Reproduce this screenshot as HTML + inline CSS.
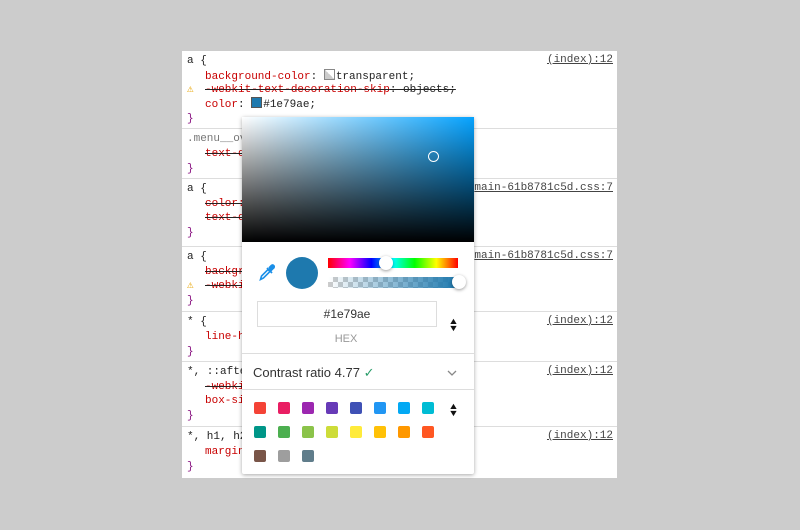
<!DOCTYPE html><html><head><style>
body{margin:0;background:#cccccc;width:800px;height:530px;position:relative;overflow:hidden;font-family:"Liberation Mono",monospace}
#p{position:absolute;left:182px;top:51px;width:435px;height:427px;background:#fff;font-size:11px}
.r{position:absolute;left:0;width:435px;border-bottom:1px solid #ddd}
.l{position:absolute;left:5px;height:14px;line-height:14px;white-space:pre;color:#222}
.k{color:#c80000}.s{text-decoration:line-through;text-decoration-color:#222}
.src{position:absolute;right:4px;color:#444;text-decoration:underline}
.g{color:#777}.b{color:#881280}
.cs{display:inline-block;width:9px;height:9px;vertical-align:-1px;margin-right:1px}
#pop{position:absolute;left:242px;top:117px;width:232px;height:357px;background:#fff;box-shadow:0 1px 4px rgba(0,0,0,.35);border-radius:2px;font-family:"Liberation Sans",sans-serif}
.sw{position:absolute;width:12px;height:12px;border-radius:2px}
.ar{position:absolute;font-size:9px;line-height:7px;color:#111;transform:scaleX(1.2)}
</style></head><body>
<div id="p">
<div class="r" style="top:0;height:77px">
<div class="l" style="top:3px">a {</div><div class="src" style="top:3px">(index):12</div>
<div class="l" style="top:18px;left:23px"><span class="k">background-color</span>: <span class="cs" style="border:1px solid #888;background:linear-gradient(45deg,#ccc 50%,#fff 50%)"></span>transparent;</div>
<div class="l" style="top:32px;left:5px"><span style="color:#e8a400">⚠</span></div>
<div class="l s" style="top:32px;left:23px"><span class="k">-webkit-text-decoration-skip</span>: objects;</div>
<div class="l" style="top:46px;left:23px"><span class="k">color</span>: <span class="cs" style="border:1px solid #555;background:#1e79ae"></span>#1e79ae;</div>
<div class="l b" style="top:61px">}</div></div>
<div class="r" style="top:78px;height:49px">
<div class="l g" style="top:3px">.menu__ov</div><div class="l k s" style="top:18px;left:23px">text-d</div><div class="l b" style="top:33px">}</div></div>
<div class="r" style="top:128px;height:67px">
<div class="l" style="top:3px">a {</div><div class="src" style="top:3px">main-61b8781c5d.css:7</div><div class="l k s" style="top:18px;left:23px">color:</div><div class="l k s" style="top:32px;left:23px">text-d</div><div class="l b" style="top:47px">}</div></div>
<div class="r" style="top:196px;height:64px">
<div class="l" style="top:3px">a {</div><div class="src" style="top:3px">main-61b8781c5d.css:7</div><div class="l k s" style="top:18px;left:23px">backgr</div><div class="l" style="top:32px"><span style="color:#e8a400">⚠</span></div><div class="l k s" style="top:32px;left:23px">-webki</div><div class="l b" style="top:47px">}</div></div>
<div class="r" style="top:261px;height:49px">
<div class="l" style="top:3px">* {</div><div class="src" style="top:3px">(index):12</div><div class="l k" style="top:18px;left:23px">line-h</div><div class="l b" style="top:33px">}</div></div>
<div class="r" style="top:311px;height:64px">
<div class="l" style="top:3px">*, ::afte</div><div class="src" style="top:3px">(index):12</div><div class="l k s" style="top:18px;left:23px">-webki</div><div class="l k" style="top:32px;left:23px">box-si</div><div class="l b" style="top:47px">}</div></div>
<div class="r" style="top:376px;height:51px;border:none">
<div class="l" style="top:3px">*, h1, h2</div><div class="src" style="top:3px">(index):12</div><div class="l k" style="top:18px;left:23px">margin</div><div class="l b" style="top:33px">}</div></div>
</div>
<div id="pop">
<div style="position:absolute;left:0;top:0;width:232px;height:125px;background:linear-gradient(to top,#000,rgba(0,0,0,0)),linear-gradient(to right,#fff,#06a3ff)"></div>
<div style="position:absolute;left:186px;top:34px;width:9px;height:9px;border:1px solid #fff;border-radius:50%"></div>
<svg style="position:absolute;left:17px;top:146px" width="16" height="18" viewBox="0 0 16 18"><path d="M1.5 16.5 L2.5 13 L9 6.5 L11 8.5 L4.5 15 Z" stroke="#1a8fe8" stroke-width="1.6" fill="none"/><path d="M8 5 L13 10 M10.5 4.5 L12.5 2.5 Q14 1.5 15 3 Q15.5 4.5 14 5.5 L12 7.5 Z" stroke="#1a8fe8" stroke-width="1.8" fill="#1a8fe8"/></svg>
<div style="position:absolute;left:44px;top:140px;width:32px;height:32px;border-radius:50%;background:#1e79ae"></div>
<div style="position:absolute;left:86px;top:141px;width:130px;height:10px;background:linear-gradient(to right,#f00,#f0f,#00f,#0ff,#0f0,#ff0,#f00)"></div>
<div style="position:absolute;left:137px;top:139px;width:14px;height:14px;border-radius:50%;background:#fff;box-shadow:0 1px 3px rgba(0,0,0,.4)"></div>
<div style="position:absolute;left:86px;top:160px;width:130px;height:11px;background:linear-gradient(to right,rgba(30,121,174,0),#1e79ae),repeating-conic-gradient(#ccc 0 25%,#fff 0 50%) 0 0/10px 10px"></div>
<div style="position:absolute;left:210px;top:158px;width:14px;height:14px;border-radius:50%;background:#fff;box-shadow:0 1px 3px rgba(0,0,0,.4)"></div>
<div style="position:absolute;left:15px;top:184px;width:178px;height:24px;border:1px solid #ddd;text-align:center;line-height:24px;font-size:12px;color:#333">#1e79ae</div>
<div style="position:absolute;left:0;width:232px;top:216px;text-align:center;font-size:11px;color:#999;padding-right:24px;box-sizing:border-box">HEX</div>
<div class="ar" style="left:207px;top:201px">▲<br>▼</div>
<div style="position:absolute;left:0;top:236px;width:232px;border-top:1px solid #ddd"></div>
<div style="position:absolute;left:11px;top:248px;font-size:13px;color:#333">Contrast ratio 4.77 <span style="color:#2a9d6a">✓</span></div>
<svg style="position:absolute;left:205px;top:253px" width="10" height="6" viewBox="0 0 10 6"><path d="M1 1 L5 5 L9 1" stroke="#888" stroke-width="1.3" fill="none"/></svg>
<div style="position:absolute;left:0;top:272px;width:232px;border-top:1px solid #ddd"></div>
<div class="sw" style="left:12px;top:285px;background:#f44336"></div><div class="sw" style="left:36px;top:285px;background:#e91e63"></div><div class="sw" style="left:60px;top:285px;background:#9c27b0"></div><div class="sw" style="left:84px;top:285px;background:#673ab7"></div><div class="sw" style="left:108px;top:285px;background:#3f51b5"></div><div class="sw" style="left:132px;top:285px;background:#2196f3"></div><div class="sw" style="left:156px;top:285px;background:#03a9f4"></div><div class="sw" style="left:180px;top:285px;background:#00bcd4"></div>
<div class="ar" style="left:207px;top:286px">▲<br>▼</div>
<div class="sw" style="left:12px;top:309px;background:#009688"></div><div class="sw" style="left:36px;top:309px;background:#4caf50"></div><div class="sw" style="left:60px;top:309px;background:#8bc34a"></div><div class="sw" style="left:84px;top:309px;background:#cddc39"></div><div class="sw" style="left:108px;top:309px;background:#ffeb3b"></div><div class="sw" style="left:132px;top:309px;background:#ffc107"></div><div class="sw" style="left:156px;top:309px;background:#ff9800"></div><div class="sw" style="left:180px;top:309px;background:#ff5722"></div>
<div class="sw" style="left:12px;top:333px;background:#795548"></div><div class="sw" style="left:36px;top:333px;background:#9e9e9e"></div><div class="sw" style="left:60px;top:333px;background:#607d8b"></div>
</div>
</body></html>
